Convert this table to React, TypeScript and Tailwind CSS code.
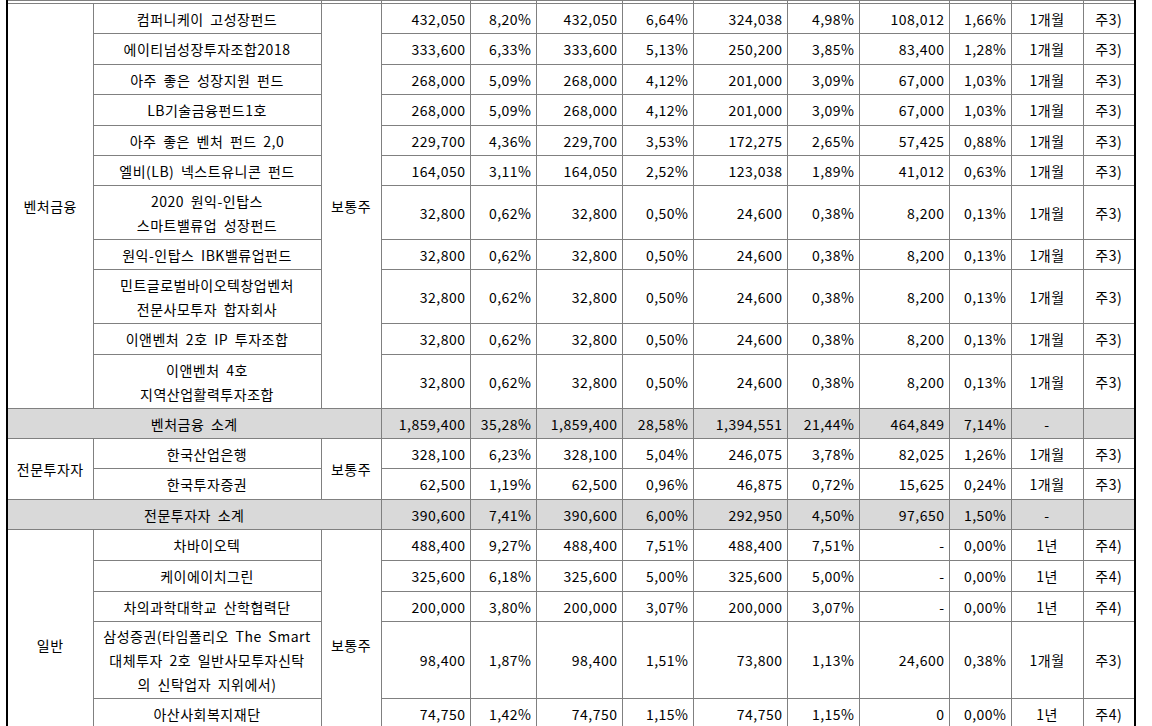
import React from 'react';

type Row = {
  name: string[];
  vals: string[];
  period: string;
  note: string;
  h: string;
};

const ventures: Row[] = [
  { name: ['컴퍼니케이 고성장펀드'], vals: ['432,050', '8,20%', '432,050', '6,64%', '324,038', '4,98%', '108,012', '1,66%'], period: '1개월', note: '주3)', h: 'h-[30px]' },
  { name: ['에이티넘성장투자조합2018'], vals: ['333,600', '6,33%', '333,600', '5,13%', '250,200', '3,85%', '83,400', '1,28%'], period: '1개월', note: '주3)', h: 'h-[31px]' },
  { name: ['아주 좋은 성장지원 펀드'], vals: ['268,000', '5,09%', '268,000', '4,12%', '201,000', '3,09%', '67,000', '1,03%'], period: '1개월', note: '주3)', h: 'h-[30px]' },
  { name: ['LB기술금융펀드1호'], vals: ['268,000', '5,09%', '268,000', '4,12%', '201,000', '3,09%', '67,000', '1,03%'], period: '1개월', note: '주3)', h: 'h-[31px]' },
  { name: ['아주 좋은 벤처 펀드 2,0'], vals: ['229,700', '4,36%', '229,700', '3,53%', '172,275', '2,65%', '57,425', '0,88%'], period: '1개월', note: '주3)', h: 'h-[30px]' },
  { name: ['엘비(LB) 넥스트유니콘 펀드'], vals: ['164,050', '3,11%', '164,050', '2,52%', '123,038', '1,89%', '41,012', '0,63%'], period: '1개월', note: '주3)', h: 'h-[30px]' },
  { name: ['2020 원익-인탑스', '스마트밸류업 성장펀드'], vals: ['32,800', '0,62%', '32,800', '0,50%', '24,600', '0,38%', '8,200', '0,13%'], period: '1개월', note: '주3)', h: 'h-[54px]' },
  { name: ['원익-인탑스 IBK밸류업펀드'], vals: ['32,800', '0,62%', '32,800', '0,50%', '24,600', '0,38%', '8,200', '0,13%'], period: '1개월', note: '주3)', h: 'h-[30px]' },
  { name: ['민트글로벌바이오텍창업벤처', '전문사모투자 합자회사'], vals: ['32,800', '0,62%', '32,800', '0,50%', '24,600', '0,38%', '8,200', '0,13%'], period: '1개월', note: '주3)', h: 'h-[54px]' },
  { name: ['이앤벤처 2호 IP 투자조합'], vals: ['32,800', '0,62%', '32,800', '0,50%', '24,600', '0,38%', '8,200', '0,13%'], period: '1개월', note: '주3)', h: 'h-[31px]' },
  { name: ['이앤벤처 4호', '지역산업활력투자조합'], vals: ['32,800', '0,62%', '32,800', '0,50%', '24,600', '0,38%', '8,200', '0,13%'], period: '1개월', note: '주3)', h: 'h-[54px]' },
];

const pros: Row[] = [
  { name: ['한국산업은행'], vals: ['328,100', '6,23%', '328,100', '5,04%', '246,075', '3,78%', '82,025', '1,26%'], period: '1개월', note: '주3)', h: 'h-[30px]' },
  { name: ['한국투자증권'], vals: ['62,500', '1,19%', '62,500', '0,96%', '46,875', '0,72%', '15,625', '0,24%'], period: '1개월', note: '주3)', h: 'h-[31px]' },
];

const general: Row[] = [
  { name: ['차바이오텍'], vals: ['488,400', '9,27%', '488,400', '7,51%', '488,400', '7,51%', '-', '0,00%'], period: '1년', note: '주4)', h: 'h-[31px]' },
  { name: ['케이에이치그린'], vals: ['325,600', '6,18%', '325,600', '5,00%', '325,600', '5,00%', '-', '0,00%'], period: '1년', note: '주4)', h: 'h-[31px]' },
  { name: ['차의과학대학교 산학협력단'], vals: ['200,000', '3,80%', '200,000', '3,07%', '200,000', '3,07%', '-', '0,00%'], period: '1년', note: '주4)', h: 'h-[30px]' },
  { name: ['삼성증권(타임폴리오 The Smart', '대체투자 2호 일반사모투자신탁', '의 신탁업자 지위에서)'], vals: ['98,400', '1,87%', '98,400', '1,51%', '73,800', '1,13%', '24,600', '0,38%'], period: '1개월', note: '주3)', h: 'h-[77px]' },
  { name: ['아산사회복지재단'], vals: ['74,750', '1,42%', '74,750', '1,15%', '74,750', '1,15%', '0', '0,00%'], period: '1년', note: '주4)', h: 'h-[31px]' },
  { name: ['서울대학교기술지주'], vals: ['50,000', '0,95%', '50,000', '0,77%', '50,000', '0,77%', '-', '0,00%'], period: '1년', note: '주4)', h: 'h-[31px]' },
];

const cell = 'border border-[#808080] px-[4px] py-0 leading-[24px] whitespace-nowrap';

function Lines({ lines }: { lines: string[] }) {
  return (
    <>
      {lines.map((l, i) => (
        <div key={i}>{l}</div>
      ))}
    </>
  );
}

function DataCells({ row }: { row: Row }) {
  return (
    <>
      {row.vals.map((v, i) => (
        <td key={i} className={`${cell} text-right`}>
          {v}
        </td>
      ))}
      <td className={`${cell} text-center`}>{row.period}</td>
      <td className={`${cell} text-center`}>{row.note}</td>
    </>
  );
}

function Section({ title, rows }: { title: string; rows: Row[] }) {
  return (
    <>
      {rows.map((r, i) => (
        <tr key={i} className={r.h}>
          {i === 0 && (
            <td rowSpan={rows.length} className={`${cell} text-center`}>
              {title}
            </td>
          )}
          <td className={`${cell} text-center`}>
            <Lines lines={r.name} />
          </td>
          {i === 0 && (
            <td rowSpan={rows.length} className={`${cell} text-center`}>
              보통주
            </td>
          )}
          <DataCells row={r} />
        </tr>
      ))}
    </>
  );
}

function Subtotal({ label, vals, h }: { label: string; vals: string[]; h: string }) {
  return (
    <tr className={`${h} bg-[#d9d9d9]`}>
      <td colSpan={3} className={`${cell} text-center`}>
        {label}
      </td>
      {vals.map((v, i) => (
        <td key={i} className={`${cell} text-right`}>
          {v}
        </td>
      ))}
      <td className={`${cell} text-center`}>-</td>
      <td className={cell}></td>
    </tr>
  );
}

export default function App() {
  return (
    <div className="bg-white min-h-screen pl-[6px] text-[14px] tracking-[0.5px] [word-spacing:3px] text-black font-['Noto_Sans_CJK_KR',sans-serif]">
      <table className="table-fixed border-collapse w-[1130px] border-x-2 border-x-black">
        <colgroup>
          <col className="w-[86px]" />
          <col className="w-[228px]" />
          <col className="w-[60px]" />
          <col className="w-[89px]" />
          <col className="w-[66px]" />
          <col className="w-[86px]" />
          <col className="w-[71px]" />
          <col className="w-[94px]" />
          <col className="w-[72px]" />
          <col className="w-[90px]" />
          <col className="w-[62px]" />
          <col className="w-[72px]" />
          <col className="w-[52px]" />
        </colgroup>
        <tbody>
          <tr className="h-[3px]">
            <td colSpan={2} className="border border-[#808080] p-0"></td>
            <td className="border border-[#808080] p-0"></td>
            <td className="border border-[#808080] p-0"></td>
            <td className="border border-[#808080] p-0"></td>
            <td className="border border-[#808080] p-0"></td>
            <td className="border border-[#808080] p-0"></td>
            <td className="border border-[#808080] p-0"></td>
            <td className="border border-[#808080] p-0"></td>
            <td className="border border-[#808080] p-0"></td>
            <td className="border border-[#808080] p-0"></td>
            <td className="border border-[#808080] p-0"></td>
            <td className="border border-[#808080] border-r-2 border-r-black p-0"></td>
          </tr>
          <Section title="벤처금융" rows={ventures} />
          <Subtotal
            label="벤처금융 소계"
            vals={['1,859,400', '35,28%', '1,859,400', '28,58%', '1,394,551', '21,44%', '464,849', '7,14%']}
            h="h-[30px]"
          />
          <Section title="전문투자자" rows={pros} />
          <Subtotal
            label="전문투자자 소계"
            vals={['390,600', '7,41%', '390,600', '6,00%', '292,950', '4,50%', '97,650', '1,50%']}
            h="h-[30px]"
          />
          <Section title="일반" rows={general} />
        </tbody>
      </table>
    </div>
  );
}
